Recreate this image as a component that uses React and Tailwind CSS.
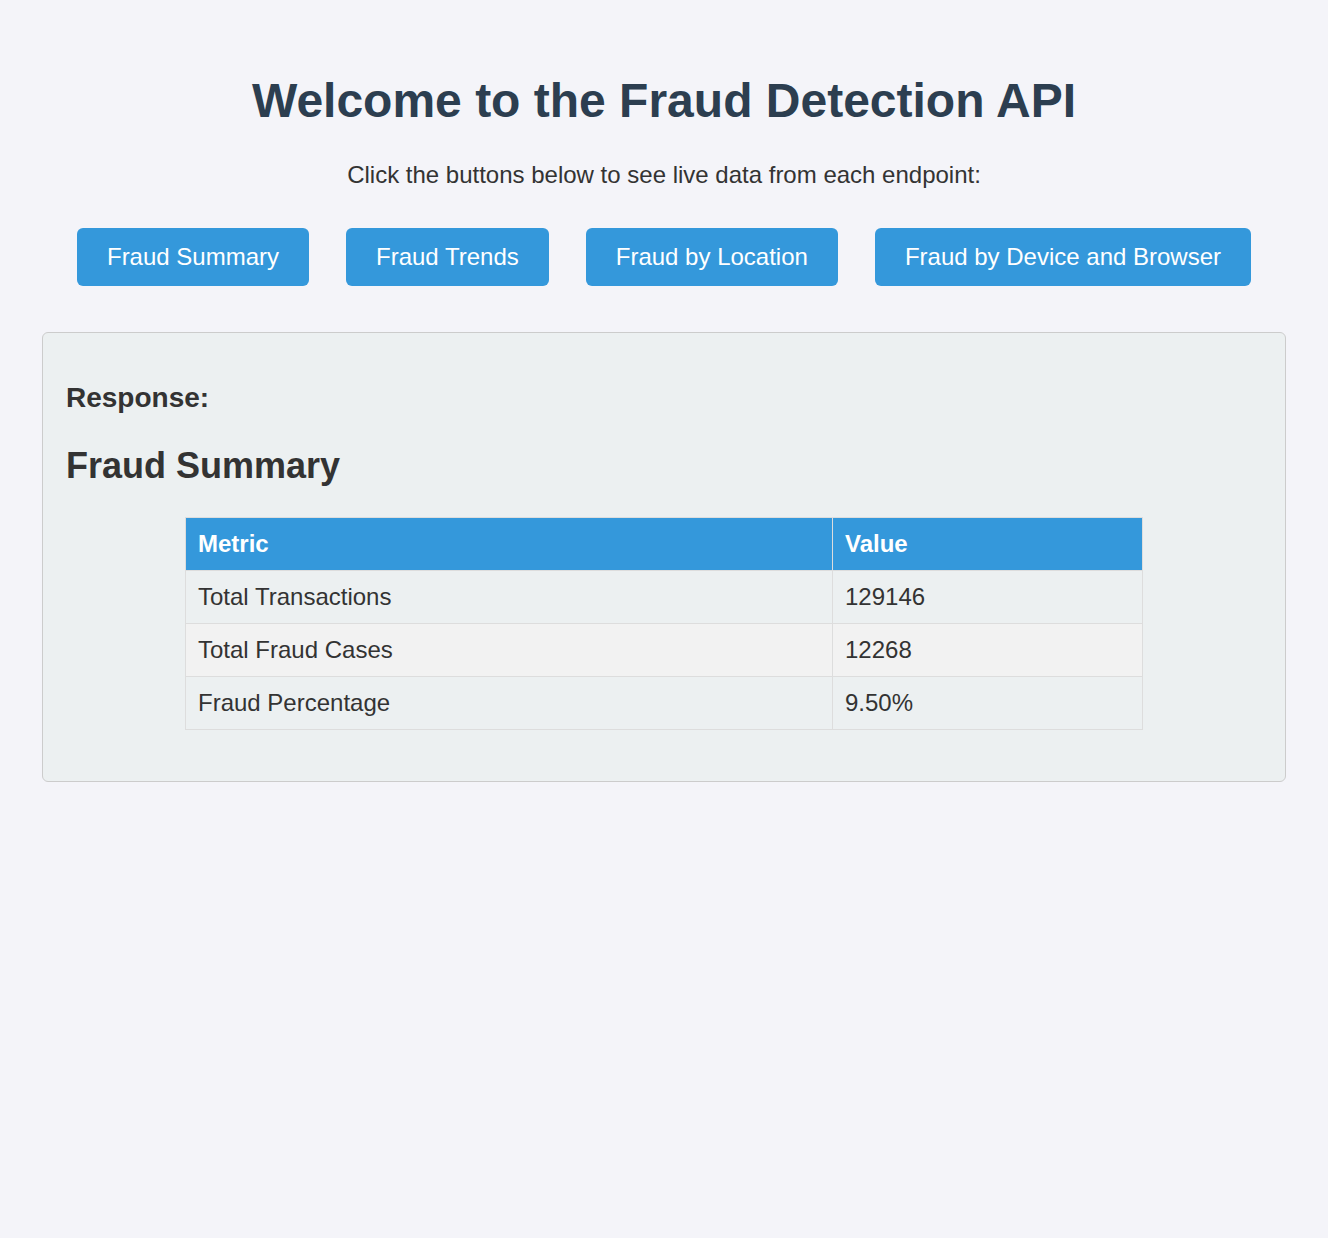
const endpoints = [
  "Fraud Summary",
  "Fraud Trends",
  "Fraud by Location",
  "Fraud by Device and Browser",
];

const rows = [
  ["Total Transactions", "129146"],
  ["Total Fraud Cases", "12268"],
  ["Fraud Percentage", "9.50%"],
];

const App = () => {
  return (
    <div className="min-h-screen bg-[#f4f4f9] px-[42px] pt-[73px] pb-10 font-['Liberation_Sans',Arial,sans-serif] text-[#333]">

      <h1 className="text-center text-[48px] font-bold leading-[55px] text-[#2c3e50]">
        Welcome to the Fraud Detection API
      </h1>

      <p className="mt-[33px] text-center text-[24px] leading-[28px]">
        Click the buttons below to see live data from each endpoint:
      </p>

      <div className="mt-[39px] flex justify-center gap-[37px]">
        {endpoints.map((name) => (
          <button
            key={name}
            className="h-[58px] rounded-[6px] bg-[#3498db] px-[30px] text-[24px] leading-[28px] text-white"
          >
            {name}
          </button>
        ))}
      </div>

      <div className="mt-[46px] rounded-[6px] border border-[#ccc] bg-[#ecf0f1] px-[23px] pt-[49px] pb-[51px]">

        <h3 className="text-[28px] font-bold leading-[32px]">Response:</h3>

        <h2 className="mt-[31px] text-[36px] font-bold leading-[41px]">
          Fraud Summary
        </h2>

        <table className="mx-auto mt-[31px] w-[958px] border-collapse text-left text-[24px] leading-[28px]">
          <thead>
            <tr className="bg-[#3498db] text-white">
              <th className="w-[647px] border border-[#ddd] px-[12px] py-[12px] font-bold">
                Metric
              </th>
              <th className="border border-[#ddd] px-[12px] py-[12px] font-bold">
                Value
              </th>
            </tr>
          </thead>
          <tbody>
            {rows.map(([metric, value], i) => (
              <tr key={metric} className={i % 2 === 1 ? "bg-[#f2f2f2]" : ""}>
                <td className="border border-[#ddd] px-[12px] py-[12px]">{metric}</td>
                <td className="border border-[#ddd] px-[12px] py-[12px]">{value}</td>
              </tr>
            ))}
          </tbody>
        </table>

      </div>

    </div>
  );
};

export default App;
